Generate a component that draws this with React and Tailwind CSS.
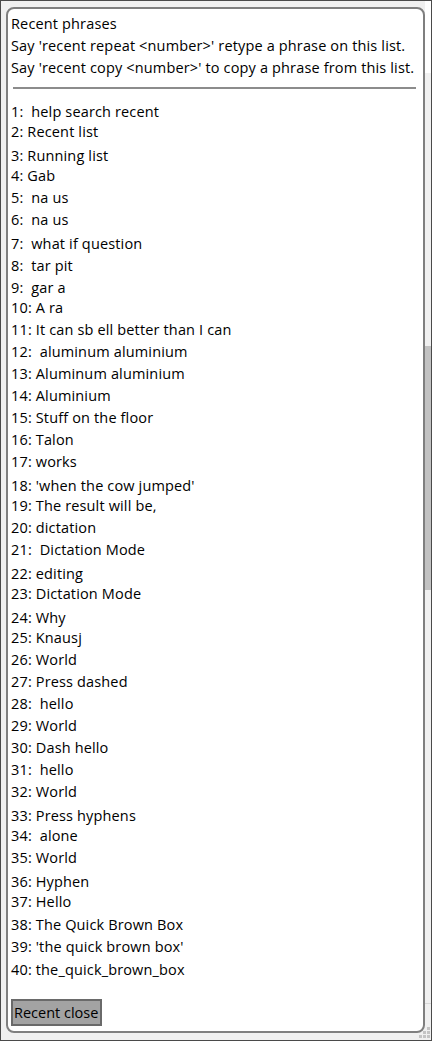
import React from "react";

const rows = [
  ["1:  help search recent", 20],
  ["2: Recent list", 24],
  ["3: Running list", 20],
  ["4: Gab", 22],
  ["5:  na us", 22],
  ["6:  na us", 24],
  ["7:  what if question", 22],
  ["8:  tar pit", 22],
  ["9:  gar a", 20],
  ["10: A ra", 22],
  ["11: It can sb ell better than I can", 22],
  ["12:  aluminum aluminium", 22],
  ["13: Aluminum aluminium", 22],
  ["14: Aluminium", 22],
  ["15: Stuff on the floor", 22],
  ["16: Talon", 22],
  ["17: works", 24],
  ["18: 'when the cow jumped'", 20],
  ["19: The result will be,", 22],
  ["20: dictation", 22],
  ["21:  Dictation Mode", 24],
  ["22: editing", 20],
  ["23: Dictation Mode", 24],
  ["24: Why", 20],
  ["25: Knausj", 22],
  ["26: World", 22],
  ["27: Press dashed", 22],
  ["28:  hello", 22],
  ["29: World", 22],
  ["30: Dash hello", 22],
  ["31:  hello", 22],
  ["32: World", 24],
  ["33: Press hyphens", 20],
  ["34:  alone", 22],
  ["35: World", 24],
  ["36: Hyphen", 20],
  ["37: Hello", 23],
  ["38: The Quick Brown Box", 22],
  ["39: 'the quick brown box'", 23],
  ["40: the_quick_brown_box", 22],
];

const hClass = {
  20: "h-[20px]",
  22: "h-[22px]",
  23: "h-[23px]",
  24: "h-[24px]",
};

function Grip() {
  const dots = [
    [8, 0],
    [4, 4],
    [8, 4],
    [0, 8],
    [4, 8],
    [8, 8],
  ];
  return (
    <svg
      className="absolute right-[1px] bottom-[2px]"
      width="11"
      height="11"
      viewBox="0 0 11 11"
    >
      {dots.map(([x, y], i) => (
        <rect key={i} x={x} y={y} width="3" height="3" fill="#c4c4c4" />
      ))}
    </svg>
  );
}

export default function App() {
  return (
    <div className="relative flex w-[432px] h-[1041px] overflow-hidden border border-[#4a4a4a] bg-[#f0f0f0] font-['Open_Sans',sans-serif] text-[14.5px] leading-[22px] tracking-[0.15px] text-black">
      <div className="ml-[5px] mt-[6px] flex h-[1026px] w-[419px] flex-col rounded-[8px] border-2 border-[#7f7f7f] bg-white pl-[3px] pt-[4px]">
        <div className="h-[22px] whitespace-pre">Recent phrases</div>
        <div className="h-[22px] whitespace-pre">
          Say 'recent repeat &lt;number&gt;' retype a phrase on this list.
        </div>
        <div className="h-[22px] whitespace-pre">
          Say 'recent copy &lt;number&gt;' to copy a phrase from this list.
        </div>
        <div className="ml-[2px] mt-[8px] h-[2px] w-[403px] bg-[#8c8c8c]" />
        <div className="mt-[12px] flex flex-col">
          {rows.map(([t, h], i) => (
            <div key={i} className={`${hClass[h]} whitespace-pre`}>
              {t}
            </div>
          ))}
        </div>
        <div className="mt-[18px] flex h-[27px] w-[91px] items-center whitespace-nowrap border-2 border-[#6a6a6a] bg-[#a3a3a3] pl-[1px] leading-[20px] tracking-[0px]">
          Recent close
        </div>
      </div>
      <div className="flex w-[6px] flex-col">
        <div className="h-[72px] bg-white" />
        <div className="h-[930px] bg-[#f0f0f0] pt-[273px]">
          <div className="h-[244px] w-[6px] bg-[#c2c2c2]" />
        </div>
        <div className="h-[1px] bg-[#d8d8d8]" />
        <div className="flex-1 bg-[#f0f0f0]" />
      </div>
      <Grip />
    </div>
  );
}
